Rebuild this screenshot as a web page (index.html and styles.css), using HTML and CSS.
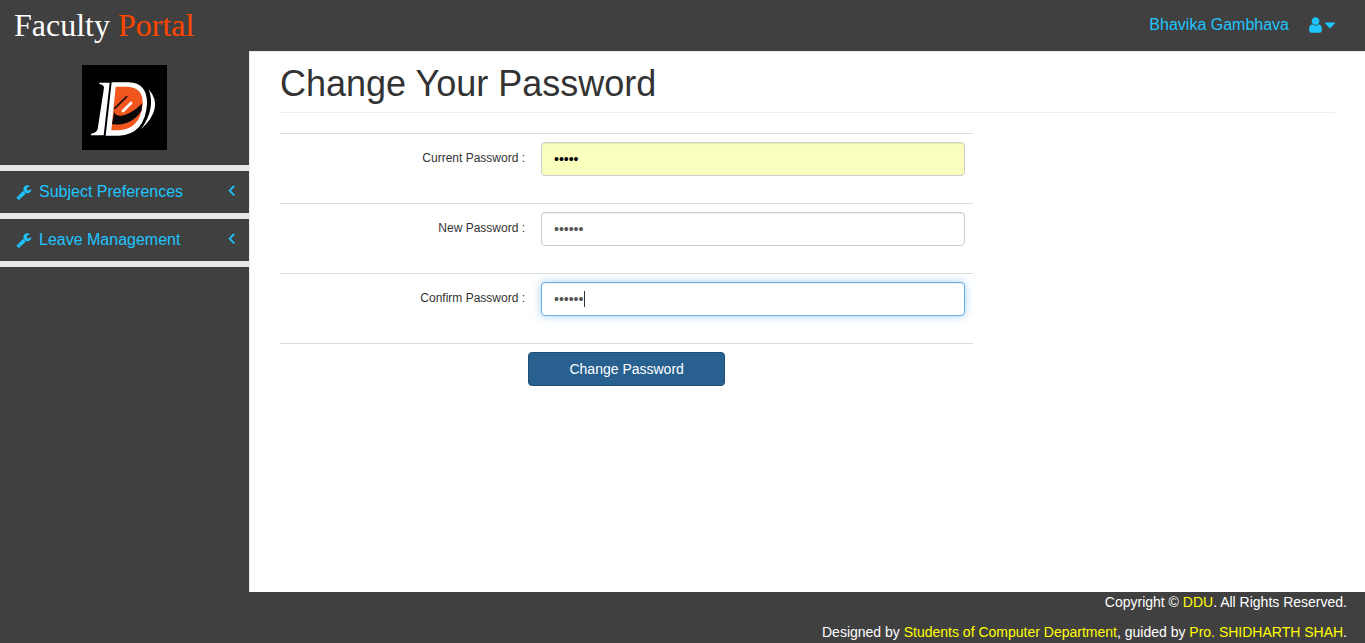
FILE: index.html
```html
<!DOCTYPE html>
<html lang="en">
<head>
<meta charset="utf-8">
<meta name="viewport" content="width=device-width, initial-scale=1">
<title>Faculty Portal</title>
<link rel="stylesheet" href="styles.css">
</head>
<body>
<svg class="sprite" aria-hidden="true">
  <symbol id="wrench" viewBox="0 0 1792 1792"><path d="M448 1472q0-26-19-45t-45-19-45 19-19 45 19 45 45 19 45-19 19-45zm644-420l-682 682q-37 37-90 37-52 0-91-37l-106-108q-38-36-38-90 0-53 38-91l681-681q39 98 114.500 173.500t173.500 114.500zm634-435q0 39-23 106-47 134-164.500 217.500t-258.500 83.500q-185 0-316.500-131.500t-131.500-316.500 131.500-316.500 316.500-131.500q58 0 121.500 16.500t107.500 46.500q16 11 16 28t-16 28l-293 169v224l193 107q5-3 79-48.500t135.500-81 70.500-35.500q15 0 23.500 10t8.500 25z"/></symbol>
  <symbol id="user" viewBox="256 0 1280 1792"><path d="M1536 1399q0 109-62.500 187t-150.500 78h-854q-88 0-150.500-78t-62.500-187q0-85 8.500-160.500t31.500-152 58.500-131 94-89 134.500-34.500q131 128 313 128t313-128q76 0 134.500 34.500t94 89 58.500 131 31.500 152 8.500 160.500zm-256-887q0 159-112.500 271.500t-271.500 112.500-271.500-112.500-112.500-271.500 112.500-271.500 271.500-112.500 271.500 112.500 112.500 271.500z"/></symbol>
  <symbol id="caret" viewBox="384 0 1024 1792"><path d="M1408 704q0 26-19 45l-448 448q-19 19-45 19t-45-19l-448-448q-19-19-19-45t19-45 45-19h896q26 0 45 19t19 45z"/></symbol>
  <symbol id="angle" viewBox="576 0 640 1792"><path stroke="currentColor" stroke-width="60" d="M1203 544q0 13-10 23l-393 393 393 393q10 10 10 23t-10 23l-50 50q-10 10-23 10t-23-10l-466-466q-10-10-10-23t10-23l466-466q10-10 23-10t23 10l50 50q10 10 10 23z"/></symbol>
</svg>

<header class="topbar">
  <a class="brand" href="#">Faculty <span class="brand-accent">Portal</span></a>
  <div class="account">
    <a class="account-name" href="#">Bhavika Gambhava</a>
    <button class="account-menu" type="button" aria-label="Account menu">
      <svg class="icon-user"><use href="#user"/></svg>
      <svg class="icon-caret"><use href="#caret"/></svg>
    </button>
  </div>
</header>

<div class="middle">
  <nav class="sidebar">
    <div class="logo-box">
      <svg class="logo" viewBox="36 30 255 255" role="img" aria-label="DDU logo">
        <rect x="36" y="30" width="255" height="255" fill="#000"/>
        <path d="M88 83H119L101 241H62L64 236Q80 233 83 222L102 98Q101 89 88 87Z" fill="#fff"/>
        <path d="M125 82H176Q232 84 231 146Q225 238 146 242H107Z" fill="#fff"/>
        <path d="M137 95H172Q219 97 218 146Q212 220 148 226H124Z" fill="#f0561d"/>
        <path d="M133 170C136 188 172 190 217 145L214 168C190 204 155 213 126 207Z" fill="#080808"/>
        <path d="M134 160L170 125" stroke="#170c08" stroke-width="5" stroke-linecap="round"/>
        <path d="M159 168L183 144" stroke="#fff" stroke-width="8" stroke-linecap="round"/>
        <path d="M236 103Q284 158 213 223Q258 160 236 103Z" fill="#fff"/>
      </svg>
    </div>
    <ul class="menu">
      <li class="menu-item"><a class="menu-link" href="#"><svg class="icon-wrench"><use href="#wrench"/></svg><span>Subject Preferences</span><svg class="icon-angle"><use href="#angle"/></svg></a></li>
      <li class="menu-item"><a class="menu-link" href="#"><svg class="icon-wrench"><use href="#wrench"/></svg><span>Leave Management</span><svg class="icon-angle"><use href="#angle"/></svg></a></li>
    </ul>
  </nav>

  <main class="content">
    <h1 class="title">Change Your Password</h1>
    <form class="form">
      <div class="row">
        <label class="label" for="current">Current Password :</label>
        <div class="field"><input class="input input-filled" id="current" type="password" value="abcde"></div>
      </div>
      <div class="row">
        <label class="label" for="new">New Password :</label>
        <div class="field"><input class="input" id="new" type="password" value="abcdef"></div>
      </div>
      <div class="row">
        <label class="label" for="confirm">Confirm Password :</label>
        <div class="field"><input class="input input-active" id="confirm" type="password" value="abcdef"><span class="cursor"></span></div>
      </div>
      <div class="actions"><button class="submit" type="button">Change Password</button></div>
    </form>
  </main>
</div>

<footer class="footer">
  <p class="footer-line">Copyright © <a class="footer-link" href="#">DDU</a>. All Rights Reserved.</p>
  <p class="footer-line">Designed by <a class="footer-link" href="#">Students of Computer Department</a>, guided by <a class="footer-link" href="#">Pro. SHIDHARTH SHAH</a>.</p>
</footer>
</body>
</html>
```
FILE: styles.css
```css
* { box-sizing: border-box; }

body {
  display: flex;
  flex-direction: column;
  min-height: 100vh;
  margin: 0;
  background: #404040;
  color: #333;
  font-family: "Liberation Sans", Arial, sans-serif;
  font-size: 14px;
  line-height: 20px;
}

a { color: inherit; text-decoration: none; }
svg { display: block; fill: currentColor; }
.sprite { display: none; }

.topbar {
  display: flex;
  align-items: center;
  justify-content: space-between;
  padding: 0 30px 0 14px;
}
.brand {
  padding-bottom: 1px;
  color: #fff;
  font-family: "Liberation Serif", "Times New Roman", serif;
  font-size: 32px;
  line-height: 50px;
}
.brand-accent { color: #ff4500; }
.account {
  display: flex;
  align-items: center;
  gap: 20px;
  padding-bottom: 2px;
  color: #1ec5ff;
  font-size: 16px;
}
.account-menu {
  display: flex;
  gap: 3px;
  padding: 0;
  border: 0;
  background: none;
  color: inherit;
}
.icon-user { width: 13px; height: 18px; }
.icon-caret { width: 10px; height: 18px; }

.middle { display: flex; flex: 1; }
.sidebar { width: 249px; flex: none; }
.logo-box { display: flex; justify-content: center; padding: 14px 0 15px; }
.logo { width: 85px; height: 85px; }
.menu {
  margin: 0;
  padding: 0;
  border-top: 6px solid #e7e7e7;
  list-style: none;
}
.menu-item { border-bottom: 6px solid #e7e7e7; }
.menu-link {
  display: flex;
  align-items: center;
  gap: 7px;
  padding: 10px 14px 10px 16px;
  color: #1ec5ff;
  font-size: 16px;
  line-height: 22px;
}
.icon-wrench { width: 16px; height: 16px; margin-bottom: 1px; }
.icon-angle { width: 7px; height: 18px; margin: 0 0 4px auto; }

.content {
  flex: 1;
  min-width: 0;
  padding: 0 30px;
  border-top: 1px solid #e7e7e7;
  border-left: 1px solid #e7e7e7;
  background: #fff;
}
.title {
  margin: 0 0 20px;
  padding: 12px 0 9px;
  border-bottom: 1px solid #eee;
  font-size: 36px;
  font-weight: 400;
  line-height: 39px;
}
.form { width: calc((100% + 30px) * 2 / 3 - 30px); }
.row {
  display: grid;
  grid-template-columns: 245px 1fr;
  gap: 16px;
  padding: 8px 8px 27px 0;
  border-top: 1px solid #ddd;
}
.label {
  padding-top: 6px;
  font-size: 12px;
  text-align: right;
}
.field { position: relative; }
.input {
  display: block;
  width: 100%;
  height: 34px;
  padding: 6px 12px;
  border: 1px solid #ccc;
  border-radius: 4px;
  outline: 0;
  background: #fff;
  box-shadow: inset 0 1px 1px rgba(0, 0, 0, .075);
  color: #555;
  font: inherit;
}
.input-filled { background: #faffbd; color: #000; }
.input-active {
  border-color: #66afe9;
  box-shadow: inset 0 1px 1px rgba(0, 0, 0, .075), 0 0 8px rgba(102, 175, 233, .6);
}
.cursor {
  position: absolute;
  top: 9px;
  left: 43px;
  width: 1px;
  height: 16px;
  background: #333;
}
.actions {
  display: flex;
  justify-content: center;
  padding: 8px;
  border-top: 1px solid #ddd;
}
.submit {
  padding: 6px 40px;
  border: 1px solid #204d74;
  border-radius: 4px;
  background: #286090;
  color: #fff;
  font: inherit;
}

.footer {
  display: flex;
  flex-direction: column;
  gap: 10px;
  padding: 0 18px 1px 0;
  color: #fff;
  text-align: right;
}
.footer-line { margin: 0; }
.footer-link { color: #ff0; }
```
